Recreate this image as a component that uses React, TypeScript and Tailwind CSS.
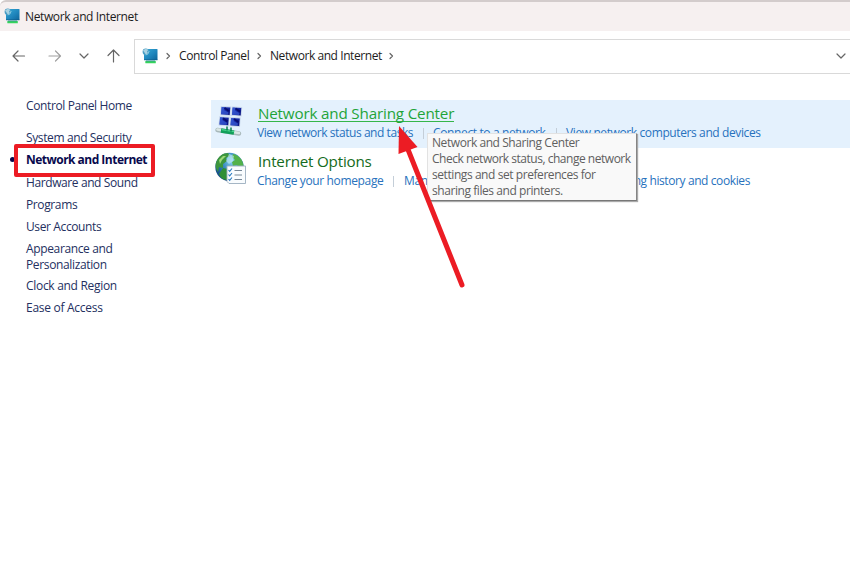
import React from "react";

const RED = "#ec1c24";

function MonitorIcon({ className = "" }: { className?: string }) {
  return (
    <svg viewBox="0 0 16 16" className={`block h-4 w-4 shrink-0 ${className}`}>
      <defs>
        <linearGradient id="screen" x1="0" y1="0" x2="1" y2="1">
          <stop offset="0" stopColor="#37a9d3" />
          <stop offset="0.55" stopColor="#1f86bd" />
          <stop offset="1" stopColor="#0e6599" />
        </linearGradient>
      </defs>
      <rect x="2" y="1" width="13.500" height="11" rx="0.6" fill="url(#screen)" />
      <path d="M2 11.800h13.500" stroke="#0d5c8c" strokeWidth="0.700" />
      <rect x="3.300" y="13" width="10.500" height="2.200" rx="0.500" fill="#35d45c" />
      <path d="M4 12.900h9" stroke="#348f9a" strokeWidth="0.800" />
      <circle cx="3.800" cy="3.800" r="3.200" fill="#4a9dc4" />
      <path d="M1 2.500C2.500.6 5 .4 6.300 2L5 3.300 5.800 5 3.800 6.600 2.500 4.600z" fill="#a9d2e2" />
      <path d="M7.200 3 6 5.800 3.800 7" stroke="#8ccde3" strokeWidth="0.900" fill="none" />
    </svg>
  );
}

function SharingIcon() {
  return (
    <svg viewBox="0 0 32 32" className="block h-8 w-8">
      <defs>
        <linearGradient id="pane" x1="0" y1="0" x2="1" y2="1">
          <stop offset="0" stopColor="#2440c0" />
          <stop offset="0.5" stopColor="#1426a0" />
          <stop offset="1" stopColor="#08107a" />
        </linearGradient>
      </defs>
      {[[6, 2], [17, 2.5], [4.500, 12.3], [15.500, 13]].map(([x, y]) => (
        <g key={`${x}-${y}`} transform={`translate(${x} ${y})`}>
          <path d="M.8 0 11.200.5 10.500 10 0 9.300z" fill="#c6d5ea" />
          <path d="M1.600 1 10.300 1.400 9.700 8.900 1 8.300z" fill="url(#pane)" />
          <path d="M1.600 1 4 1.200 4.200 4.200 8.500 6.500 8 8.600 1 8.300z" fill="#3c63dc" opacity=".65" />
          <path d="M4.500 2 9 5" stroke="#080d70" strokeWidth="2" />
        </g>
      ))}
      <path d="M3.500 26 25 29.500" stroke="#a8b8ba" strokeWidth="4.400" strokeLinecap="round" />
      <path d="M3.500 25.500 25 29" stroke="#dae7e5" strokeWidth="2.500" strokeLinecap="round" />
      <path d="M7 26.500 20 28.600" stroke="#13a05a" strokeWidth="4.500" />
      <path d="M8 25.700 20 27.600" stroke="#49d68b" strokeWidth="1.200" />
      <path d="M13 22.500v4M17 23.500v4" stroke="#0b7d50" strokeWidth="1.500" />
    </svg>
  );
}

function GlobeIcon() {
  return (
    <svg viewBox="0 0 32 32" className="block h-8 w-8">
      <defs>
        <radialGradient id="ocean" cx="0.6" cy="0.300" r="0.800">
          <stop offset="0" stopColor="#8bd5ee" />
          <stop offset="0.500" stopColor="#2d7fb9" />
          <stop offset="1" stopColor="#0c3970" />
        </radialGradient>
      </defs>
      <circle cx="15.500" cy="15" r="14.200" fill="url(#ocean)" />
      <path d="M2 11C4 4 9 1 14 1L16 4 12 6 13 9 9 12 9 16 5 15 4 20C2 17 1 14 2 11z" fill="#3d963d" />
      <path d="M9 16 14 17 17 21 13 28C9 28 6 25 5 22z" fill="#2f8f35" />
      <path d="M19 2C25 3 29 8 29.500 14L26 17 23 13 19 14 18 10 21 8 18 5z" fill="#52b14a" />
      <path d="M5 8 9 4 12 4 8 8 6 12z" fill="#9dd978" />
      <path d="M15 2 20 4 19 9 15 12 12 9z" fill="#c8eef4" opacity=".6" />
      <path d="M13 14H31.500V31.500H15L13 29.500z" fill="#f9fcfe" stroke="#9baebe" strokeWidth="0.900" />
      <path d="M20.500 18.500H28M20.500 23H28M20.500 27.500H28" stroke="#778898" strokeWidth="1.100" />
      <path d="m14.500 18 1.200 1.300 2.300-2.800m-3.500 6 1.200 1.300 2.300-2.800m-3.500 6 1.200 1.300 2.300-2.800" fill="none" stroke="#287ac0" strokeWidth="1.100" />
    </svg>
  );
}

function Glyph({ d, w, h, color = "#666" }: { d: string; w: number; h: number; color?: string }) {
  return (
    <svg width={w} height={h} viewBox={`0 0 ${w} ${h}`} className="block shrink-0" fill="none" stroke={color} strokeWidth="1.200" strokeLinecap="round" strokeLinejoin="round">
      <path d={d} />
    </svg>
  );
}

const chevronRight = "m1 1.500 2.500 2.500-2.500 2.500";
const chevronDown = "m1 1 4 4 4-4";

function Sep() {
  return <span className="mt-[3px] h-[11px] w-px shrink-0 bg-[#c4ced8]" />;
}

export default function App() {
  return (
    <div className="relative h-[583px] w-[850px] overflow-hidden bg-white font-['Open_Sans','Noto_Sans',sans-serif] text-[12px] leading-4 text-[#1c1c1c]">
      <header className="flex h-[31px] items-center rounded-tl-[6px] border-t-2 border-[#d3cccc] bg-[#f6f0f0] pl-1">
        <MonitorIcon className="-mt-px" />
        <h1 className="ml-[5px] whitespace-nowrap tracking-[-0.38px]">Network and Internet</h1>
      </header>

      <nav className="flex h-[43px] pt-2">
        <div className="flex h-[34px] w-[134px] shrink-0 items-center pl-3">
          <Glyph w={14} h={12} d="M12.500 6H1M6 1 1 6l5 5" />
          <span className="ml-[22px]"><Glyph w={14} h={12} color="#a0a0a0" d="M1 6h11.500M7.500 1l5 5-5 5" /></span>
          <span className="ml-[17px]"><Glyph w={10} h={6} d={chevronDown} /></span>
          <span className="ml-[18px]"><Glyph w={13} h={14} d="M6.500 13V1M1 6.500 6.500 1 12 6.500" /></span>
        </div>
        <div className="flex h-[35px] flex-1 items-center border border-r-0 border-[#d9d9d9] pb-px pl-2">
          <MonitorIcon className="-mt-px -ml-px" />
          <span className="ml-[8px]"><Glyph w={5} h={8} d={chevronRight} /></span>
          <span className="ml-[8px] w-[70px] whitespace-nowrap tracking-[-0.42px]">Control Panel</span>
          <span className="ml-[8px]"><Glyph w={5} h={8} d={chevronRight} /></span>
          <span className="ml-[8px] w-[112px] whitespace-nowrap tracking-[-0.43px]">Network and Internet</span>
          <span className="ml-[7px]"><Glyph w={5} h={8} d={chevronRight} /></span>
          <span className="mr-1 ml-auto"><Glyph w={10} h={6} d={chevronDown} /></span>
        </div>
      </nav>

      <main className="flex">
        <aside className="flex w-[211px] shrink-0 flex-col gap-[6.200px] pt-[24px] pl-[26px] whitespace-nowrap text-[#24305f]">
          <a className="mb-[10px] tracking-[-0.38px]">Control Panel Home</a>
          <a className="tracking-[-0.38px]">System and Security</a>
          <a className="font-bold tracking-[-0.52px] text-[#08094d]">Network and Internet</a>
          <a className="tracking-[-0.4px]">Hardware and Sound</a>
          <a className="tracking-[-0.38px]">Programs</a>
          <a className="tracking-[-0.38px]">User Accounts</a>
          <a className="tracking-[-0.36px]">Appearance and<br />Personalization</a>
          <a className="-mt-[1.500px] tracking-[-0.3px]">Clock and Region</a>
          <a className="tracking-[-0.28px]">Ease of Access</a>
        </aside>

        <div className="flex-1 pt-[26px] whitespace-nowrap text-[#2872bd]">
          <section className="flex h-[48px] bg-[#e4f1fd] pt-1 pl-[3px]">
            <SharingIcon />
            <div className="ml-3">
              <h2 className="-mt-px h-[19px] w-[196px] border-b border-[#35b64a] text-[15.200px] leading-[21px] tracking-[-0.17px] text-[#1fa439]">Network and Sharing Center</h2>
              <div className="-ml-px mt-[3px] flex">
                <a className="w-[156px] tracking-[-0.44px]">View network status and tasks</a>
                <span className="ml-[10px] flex"><Sep /></span>
                <a className="ml-[9px] w-[113px] tracking-[-0.37px]">Connect to a network</a>
                <span className="ml-[10px] flex"><Sep /></span>
                <a className="ml-[9px] tracking-[-0.39px]">View network computers and devices</a>
              </div>
            </div>
          </section>
          <section className="flex pt-1 pl-[3px]">
            <GlobeIcon />
            <div className="ml-3">
              <h2 className="-mt-px h-5 text-[15.200px] leading-[20px] tracking-[-0.21px] text-[#146b20]">Internet Options</h2>
              <div className="-ml-px mt-[2px] flex">
                <a className="w-[126px] tracking-[-0.36px]">Change your homepage</a>
                <span className="ml-[10px] flex"><Sep /></span>
                <a className="ml-[10px] w-[139px] tracking-[-0.39px]">Manage browser add-ons</a>
                <span className="ml-[9px] flex"><Sep /></span>
                <a className="ml-[9px] tracking-[-0.4px]">Delete browsing history and cookies</a>
              </div>
            </div>
          </section>
        </div>
      </main>

      <span className="absolute top-[157px] left-[10px] h-[5px] w-[5px] rounded-full bg-[#08094d]" />
      <div className="absolute top-[144px] left-[14px] h-[33px] w-[141px] rounded-[2px] border-4 border-[#ec1c24]" />

      <div role="tooltip" className="absolute top-[133px] left-[427px] h-[68px] w-[210px] border border-[#e2e2e2] border-r-[#858585] border-b-[#777] bg-[#f9f9f9] pt-px pl-1 whitespace-nowrap text-[#606060] shadow-[1px_1px_1px_#aaa]">
        <p className="tracking-[-0.43px]">Network and Sharing Center</p>
        <p className="tracking-[-0.48px]">Check network status, change network</p>
        <p className="tracking-[-0.43px]">settings and set preferences for</p>
        <p className="tracking-[-0.43px]">sharing files and printers.</p>
      </div>

      <svg className="pointer-events-none absolute top-[120px] left-[390px]" width="90" height="175" viewBox="390 120 90 175">
        <path d="M407 147 462 285" stroke={RED} strokeWidth="5" strokeLinecap="round" />
        <path d="M399 126 417.500 147 398.500 154z" fill={RED} />
      </svg>
    </div>
  );
}
